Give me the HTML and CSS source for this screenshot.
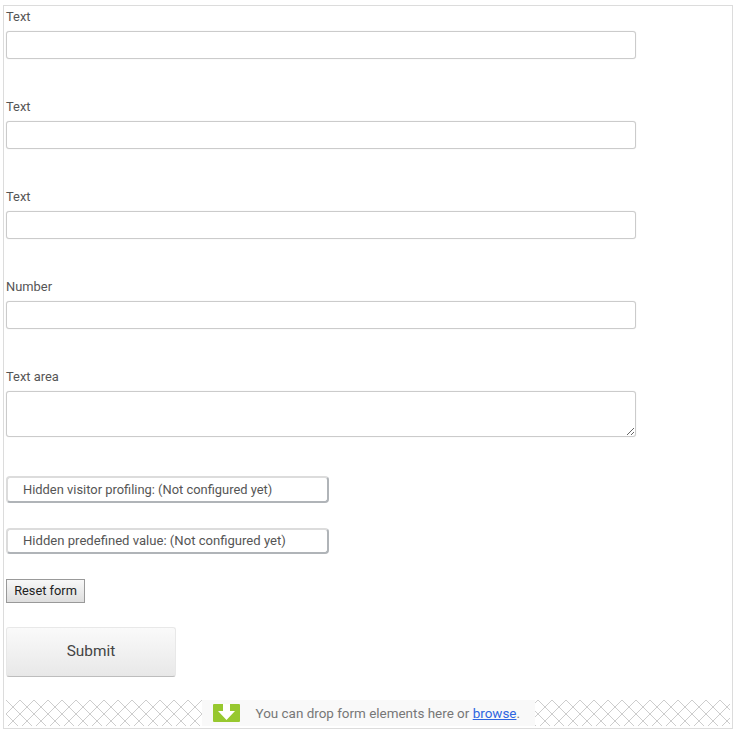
FILE: index.html
```html
<!DOCTYPE html>
<html lang="en">
<head>
<meta charset="utf-8">
<title>Form</title>
<link rel="stylesheet" href="styles.css">
</head>
<body>
<form class="frame">
  <div class="field"><label class="label">Text</label><input class="input" type="text"></div>
  <div class="field"><label class="label">Text</label><input class="input" type="text"></div>
  <div class="field"><label class="label">Text</label><input class="input" type="text"></div>
  <div class="field"><label class="label">Number</label><input class="input" type="text"></div>
  <div class="field field-area"><label class="label">Text area</label><textarea class="input area"></textarea></div>
  <div class="hidden-item first">Hidden visitor profiling: (Not configured yet)</div>
  <div class="hidden-item second">Hidden predefined value: (Not configured yet)</div>
  <button class="reset" type="button">Reset form</button>
  <button class="submit" type="button">Submit</button>
  <div class="dropzone">
    <div class="drop-msg">
      <svg class="drop-icon" width="27" height="18" viewBox="0 0 27 18"><rect width="27" height="18" rx="1" fill="#97c82f"/><path d="M10 0h7v7h5l-8.500 9L5 7h5z" fill="#fff"/></svg>
      <span class="drop-text">You can drop form elements here or <a class="browse" href="#">browse</a>.</span>
    </div>
  </div>
</form>
</body>
</html>
```
FILE: styles.css
```css
* { box-sizing: border-box; }
html, body { margin: 0; padding: 0; background: #fff; }
body { padding: 5px 5px 0 3px; height: 732px; overflow: hidden; }
.frame {
  display: block;
  width: 730px;
  height: 724px;
  border: 1px solid #dcdcdc;
  padding: 0 2px;
  font-family: Roboto, "Liberation Sans", sans-serif;
  color: #555;
}
.field { height: 90px; }
.field-area { height: 110px; }
.label { display: block; height: 25px; font-size: 12.9px; line-height: 22px; }
.input {
  display: block;
  width: 630px;
  height: 28px;
  border: 1px solid #cbcbcb;
  border-radius: 3px;
  box-shadow: 0 0 1px #d4d4d4;
  background: #fff;
  padding: 0;
  margin: 0;
  outline: none;
}
.area { height: 46px; resize: both; }
.hidden-item {
  width: 323px;
  height: 26px;
  border: 2px solid #dcdcdc;
  border-right-color: #b0b4b8;
  border-bottom-color: #b0b4b8;
  border-radius: 4px;
  padding-left: 15px;
  font-size: 12.9px;
  line-height: 22px;
  color: #555;
}
.first { height: 27px; line-height: 24px; margin-bottom: 25px; }
.second { margin-bottom: 25px; font-size: 13.1px; }
.reset {
  display: block;
  width: 79px;
  height: 24px;
  padding: 0 0 2px;
  border: 1px solid #999;
  border-radius: 0;
  background: linear-gradient(#f8f8f8, #dedede);
  font-family: Roboto, "Liberation Sans", sans-serif;
  font-size: 12.8px;
  color: #222;
}
.submit {
  display: block;
  width: 170px;
  height: 50px;
  margin-top: 24px;
  padding: 0 0 2px;
  border: 1px solid #e8e8e8;
  border-bottom: 1px solid #bdbdbd;
  border-radius: 3px;
  background: linear-gradient(#fafafa, #e8e8e8);
  font-family: Roboto, "Liberation Sans", sans-serif;
  font-size: 15.4px;
  color: #444;
}
.dropzone {
  display: flex;
  justify-content: center;
  height: 26px;
  margin-top: 23px;
  background-color: #fff;
  background-image:
    linear-gradient(45deg, transparent 47.500%, #cdcdcd 47.500% 52.500%, transparent 52.500%),
    linear-gradient(-45deg, transparent 47.500%, #cdcdcd 47.500% 52.500%, transparent 52.500%);
  background-size: 14px 14px;
}
.drop-msg {
  display: flex;
  align-items: center;
  width: 333px;
  height: 26px;
  background: #f9f9f9;
  padding-left: 11px;
}
.drop-icon { flex: none; margin-right: 16px; }
.drop-text { font-family: Roboto, sans-serif; font-size: 13.45px; color: #777; white-space: nowrap; }
.browse { color: #2f66e0; }
```
